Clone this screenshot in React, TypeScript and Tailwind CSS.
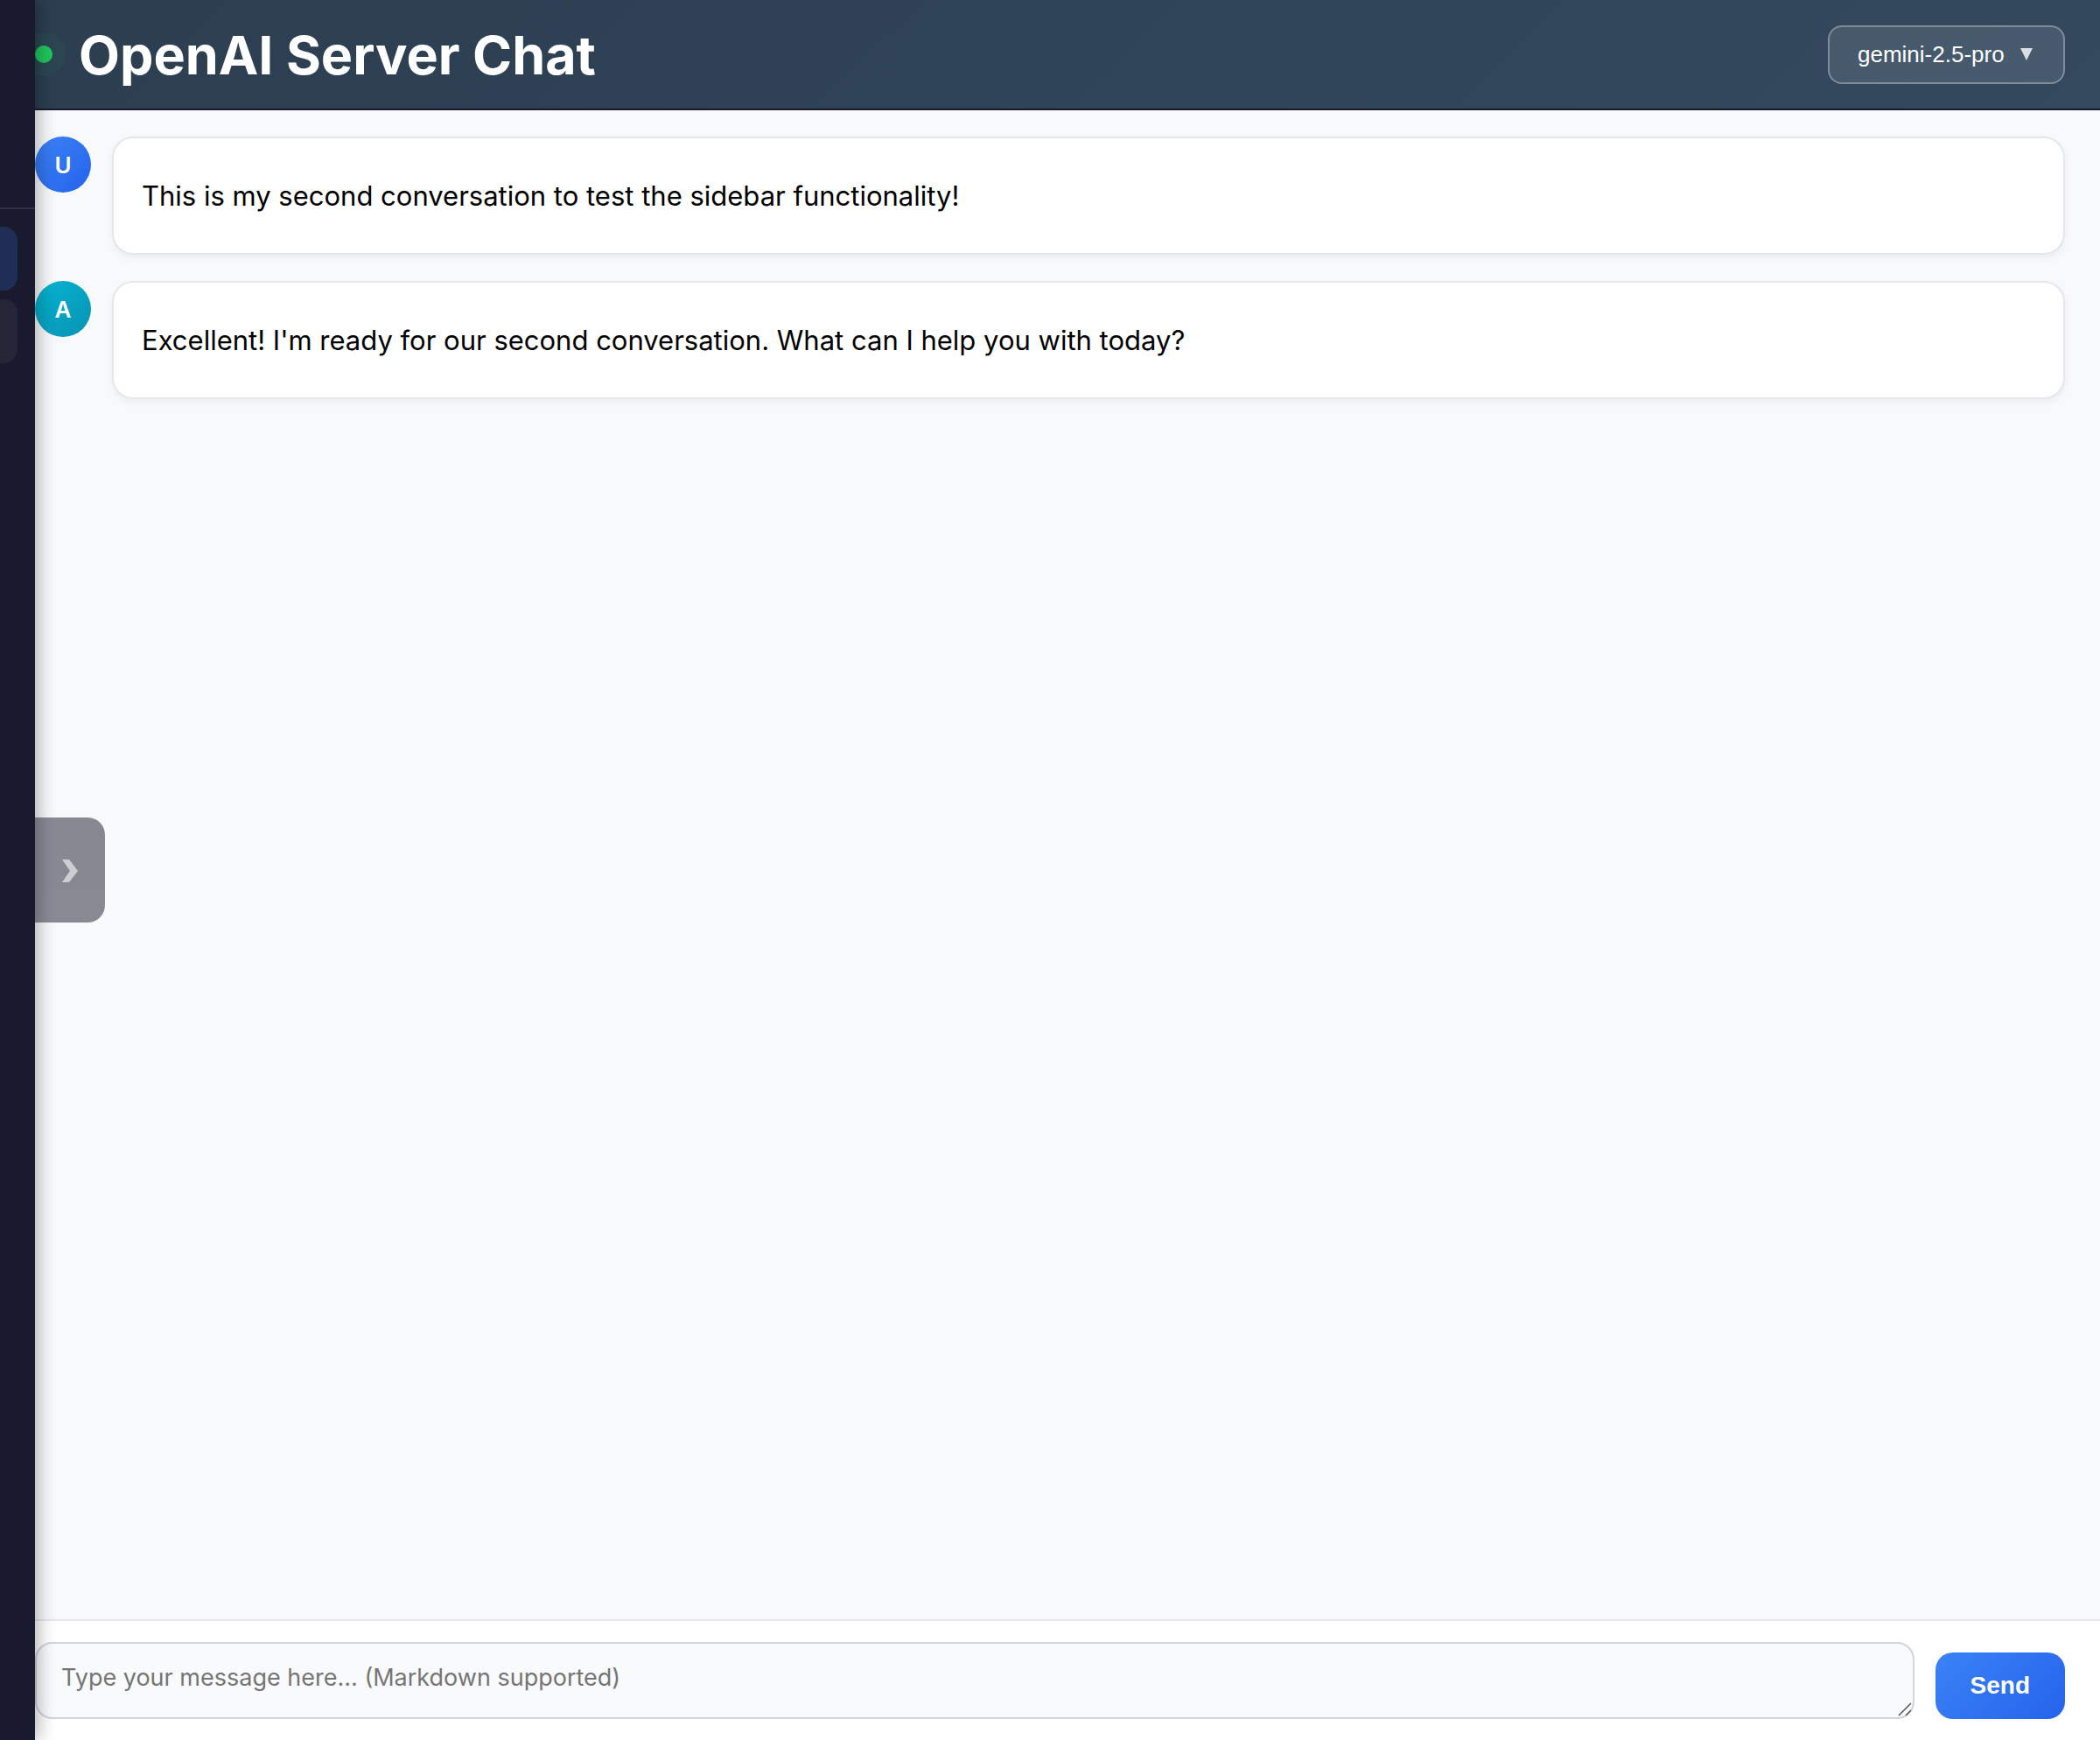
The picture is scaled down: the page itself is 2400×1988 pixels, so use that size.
import React from "react";

const messages = [
  {
    initial: "U",
    author: "User",
    avatar: "bg-linear-135 from-[#3b82f6] to-[#2563eb]",
    text: "This is my second conversation to test the sidebar functionality!",
  },
  {
    initial: "A",
    author: "Assistant",
    avatar: "bg-linear-135 from-[#06b6d4] to-[#0891b2]",
    text: "Excellent! I'm ready for our second conversation. What can I help you with today?",
  },
];

function Sidebar() {
  return (
    <aside className="relative z-10 flex w-10 shrink-0 flex-col bg-[#1a1a2e] shadow-[4px_0_20px_rgba(0,0,0,0.3)]">
      <div className="h-[239px] border-b-2 border-white/10" />
      <nav aria-label="Conversations" className="flex flex-col gap-[10px] pt-5 pr-5">
        <button aria-label="Current conversation" className="h-[73px] rounded-r-2xl bg-[#3b82f6]/20" />
        <button aria-label="Previous conversation" className="h-[73px] rounded-r-2xl bg-white/5" />
      </nav>
      <button
        aria-label="Open sidebar"
        className="absolute top-1/2 left-full flex h-[120px] w-20 -translate-y-1/2 items-center justify-center rounded-r-[20px] bg-[#1a1a2e] pt-0.5 opacity-50"
      >
        <svg width="18" height="26" viewBox="0 0 18 26" fill="#fff" fillOpacity="0.6" aria-hidden="true">
          <path d="M0 0H8L18 13L8 26H0L9 13Z" />
        </svg>
      </button>
    </aside>
  );
}

function Header() {
  return (
    <header className="flex h-[126px] items-center justify-between border-b-2 border-[#1a1a2e] bg-linear-135 from-[#2c3e50] to-[#34495e] pr-10">
      <div className="flex items-center gap-[30px]">
        <span className="size-5 rounded-full bg-[#22c55e] shadow-[0_0_0_15px_rgba(34,197,94,0.06)]" />
        <h1 className="pt-0.5 text-[61px] leading-[72px] font-bold text-white">OpenAI Server Chat</h1>
      </div>
      <div className="relative font-['Liberation_Sans',sans-serif] text-white">
        <select
          aria-label="Model"
          defaultValue="gemini-2.5-pro"
          className="h-[67px] appearance-none rounded-2xl border-2 border-white/30 bg-white/10 pr-[67px] pl-8 text-[26px]"
        >
          <option>gemini-2.5-pro</option>
        </select>
        <svg
          width="14"
          height="14"
          viewBox="0 0 14 14"
          fill="#fff"
          fillOpacity="0.8"
          className="pointer-events-none absolute top-[26px] right-[37px]"
          aria-hidden="true"
        >
          <path d="M0 0H14L7 14Z" />
        </svg>
      </div>
    </header>
  );
}

export default function App() {
  return (
    <div className="flex min-h-screen overflow-hidden bg-[#f8f9fb] font-['Inter',sans-serif]">
      <Sidebar />
      <div className="flex min-w-0 flex-1 flex-col">
        <Header />
        <main className="flex flex-1 flex-col gap-[30px] pt-[30px] pr-10">
          {messages.map((m) => (
            <article key={m.initial} className="flex items-start gap-6">
              <div
                aria-label={m.author}
                className={`flex size-16 shrink-0 items-center justify-center rounded-full text-[26px] font-semibold text-white ${m.avatar}`}
              >
                {m.initial}
              </div>
              <p className="flex-1 rounded-3xl border-2 border-[#e5e7eb] bg-white px-8 py-[41px] text-[31px] leading-[49px] text-black shadow-[0_4px_8px_rgba(0,0,0,0.05)]">
                {m.text}
              </p>
            </article>
          ))}
        </main>
        <form
          onSubmit={(e) => e.preventDefault()}
          className="flex items-end gap-6 border-t-2 border-[#e5e7eb] bg-white pt-6 pr-10 pb-6"
        >
          <div className="relative flex flex-1">
            <textarea
              aria-label="Message"
              rows={1}
              placeholder="Type your message here... (Markdown supported)"
              className="h-[88px] flex-1 resize-none rounded-[20px] border-2 border-[#d1d5db] bg-[#f9fafb] px-7 pt-[19px] text-[27px] leading-[40px] placeholder:text-[#757575]"
            />
            <svg
              width="16"
              height="16"
              viewBox="0 0 16 16"
              fill="none"
              stroke="#555"
              strokeWidth="1.5"
              className="pointer-events-none absolute right-[3px] bottom-[3px]"
              aria-hidden="true"
            >
              <path d="M1 15L15 1M9 15L15 9" />
            </svg>
          </div>
          <button className="h-[76px] rounded-[20px] bg-linear-135 from-[#3b82f6] to-[#2563eb] px-10 font-['Liberation_Sans',sans-serif] text-[28px] font-bold text-white">
            Send
          </button>
        </form>
      </div>
    </div>
  );
}
